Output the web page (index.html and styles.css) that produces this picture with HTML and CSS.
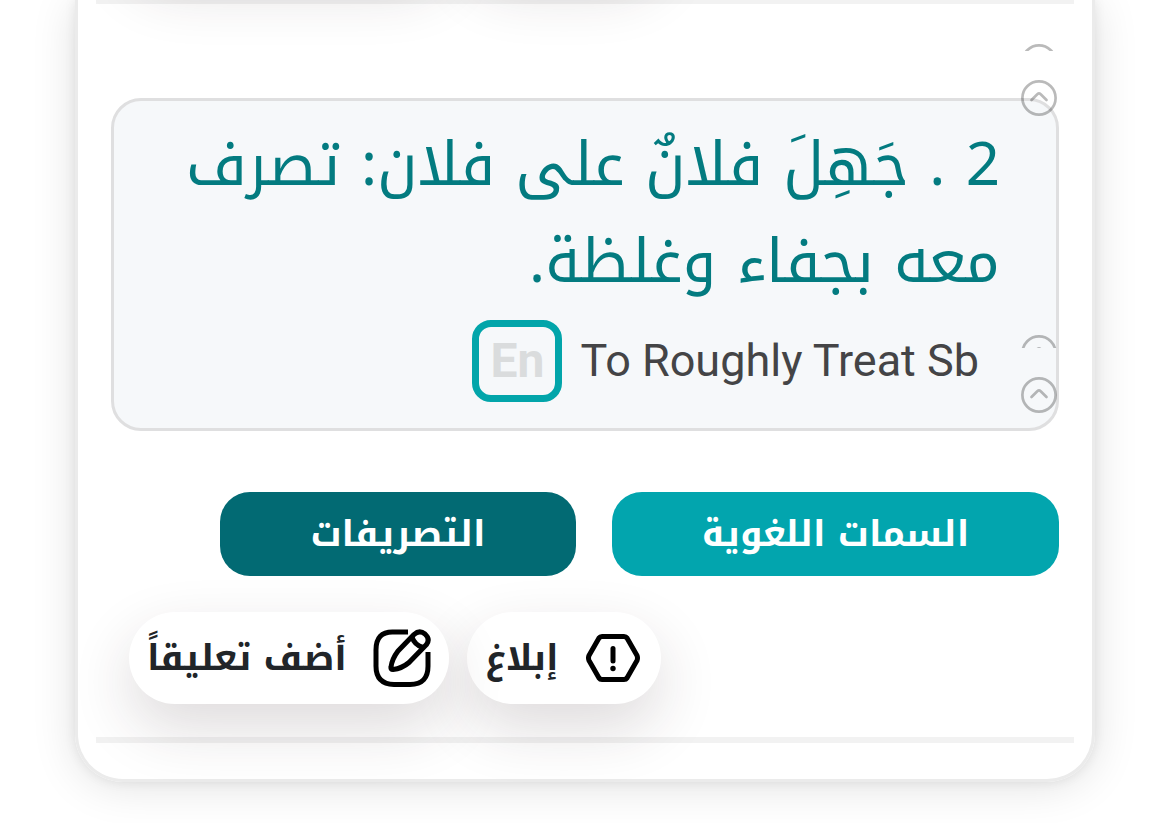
FILE: index.html
```html
<!DOCTYPE html>
<html lang="ar" dir="rtl">
<head>
<meta charset="utf-8">
<meta name="viewport" content="width=device-width, initial-scale=1">
<title>جهل</title>
<link rel="stylesheet" href="styles.css">
</head>
<body>
<main class="card">
  <div class="actions actions-previous" aria-hidden="true">
    <span class="pill pill-short"></span>
    <span class="pill pill-long"></span>
  </div>
  <hr class="divider">

  <section class="entry">
    <div class="definition">
      <p class="meaning">2 . جَهِلَ فلانٌ على فلان: تصرف معه بجفاء وغلظة.</p>
      <div class="translation">
        <span class="english" lang="en" dir="ltr">To Roughly Treat Sb</span>
        <button class="lang" type="button" lang="en">En</button>
      </div>
      <svg class="marks" width="36" height="370" viewBox="0 0 36 370" fill="none" stroke="#000" stroke-opacity=".27" stroke-width="2.7" stroke-linecap="round" stroke-linejoin="round" aria-hidden="true">
        <defs>
          <clipPath id="clip-top"><rect width="36" height="7"/></clipPath>
          <clipPath id="clip-mid"><rect y="291" width="36" height="13"/></clipPath>
        </defs>
        <circle cx="18" cy="18" r="16.6" clip-path="url(#clip-top)"/>
        <circle cx="18" cy="54" r="16.6"/>
        <path d="M10.5 56l5.8-5.8q1.7-1.5 3.4 0l5.8 5.8"/>
        <g clip-path="url(#clip-mid)">
          <circle cx="18" cy="309" r="16.6"/>
          <path d="M10.5 311l5.8-5.8q1.7-1.5 3.4 0l5.8 5.8"/>
        </g>
        <circle cx="18" cy="351" r="16.6"/>
        <path d="M10.5 353l5.8-5.8q1.7-1.5 3.4 0l5.8 5.8"/>
      </svg>
    </div>

    <div class="tabs">
      <button class="tab tab-features" type="button">السمات اللغوية</button>
      <button class="tab tab-forms" type="button">التصريفات</button>
    </div>
  </section>

  <div class="actions">
    <button class="pill pill-short" type="button">
      <svg width="54" height="50" viewBox="0 0 54 50" fill="none" stroke="#000" stroke-width="5" stroke-linecap="round" stroke-linejoin="round" aria-hidden="true">
        <path d="M16 3.5H38Q40 3.5 41 5L51 22.500Q52 25 51 27.500L41 45Q40 46.500 38 46.500H16Q14 46.500 13 45L3 27.500Q2 25 3 22.500L13 5Q14 3.500 16 3.500Z"/>
        <path d="M27 15.500V28"/>
        <circle cx="27" cy="35.500" r="2.700" fill="#000" stroke="none"/>
      </svg>
      <span>إبلاغ</span>
    </button>
    <button class="pill pill-long" type="button">
      <svg width="58" height="58" viewBox="0 0 58 58" fill="none" stroke="#000" stroke-width="5" stroke-linecap="butt" stroke-linejoin="round" aria-hidden="true">
        <path d="M35 3H21Q2.500 2 3 22V36Q2.500 55 21 55.500H37Q55.500 55.500 55 36V23"/>
        <path d="M41 5.500Q46.500 0.500 52 5Q57.500 10 53.500 15.500L36 33.500Q29 39.500 20 40.500Q17.500 40.500 18 38Q19 30 25 22Z"/>
        <path d="M39 8Q41.500 16 50 18.500"/>
      </svg>
      <span>أضف تعليقاً</span>
    </button>
  </div>
  <hr class="divider">
</main>
</body>
</html>
```
FILE: styles.css
```css
* {
  box-sizing: border-box;
}

body {
  margin: 0;
  padding: 0 75px 41px;
  background: #fff;
  overflow: hidden;
  font-family: "Noto Kufi Arabic", "Noto Sans Arabic", "DejaVu Sans", sans-serif;
}

button {
  font: inherit;
  padding: 0;
  border: 0;
  background: none;
  cursor: pointer;
}

.card {
  display: flow-root;
  padding: 0 18px 36px;
  border: 3px solid #ebebeb;
  border-top: 0;
  border-radius: 0 0 48px 48px;
  box-shadow: 0 0 12px rgba(0, 0, 0, 0.08), 0 4px 45px rgba(0, 0, 0, 0.12);
}

.divider {
  height: 6px;
  margin: 33px 0 0;
  border: 0;
  background: rgba(0, 0, 0, 0.05);
}

.entry {
  padding: 94px 15px 0;
}

.definition {
  position: relative;
  min-height: 333px;
  padding: 16px 56px 26px;
  border: 3px solid #dfdfe0;
  border-radius: 30px;
  background: #f6f8fa;
}

.meaning {
  margin: 0;
  color: #037b80;
  font-size: 60px;
  line-height: 97px;
}

.translation {
  display: flex;
  align-items: center;
  gap: 18px;
  margin-top: 9px;
  padding-right: 21px;
}

.english {
  color: #444446;
  font-family: Roboto, sans-serif;
  font-size: 45px;
  line-height: 82px;
}

.lang {
  width: 90px;
  height: 82px;
  border: 7px solid #02a5aa;
  border-radius: 19px;
  color: #dadcdd;
  font-family: Roboto, sans-serif;
  font-size: 48px;
  font-weight: 700;
  line-height: 68px;
}

.marks {
  position: absolute;
  top: -57px;
  right: -1px;
}

.tabs {
  display: flex;
  gap: 36px;
  margin-top: 61px;
}

.tab {
  height: 84px;
  border-radius: 30px;
  color: #fff;
  font-size: 36px;
  font-weight: 700;
}

.tab-features {
  width: 447px;
  background: #02a5ae;
}

.tab-forms {
  width: 356px;
  background: #026a73;
}

.actions {
  display: flex;
  justify-content: flex-end;
  gap: 18px;
  margin-top: 36px;
  padding-left: 33px;
}

.actions-previous {
  margin-top: -127px;
}

.pill {
  display: flex;
  align-items: center;
  justify-content: space-between;
  height: 92px;
  padding: 0 18px;
  border-radius: 46px;
  background: #fff;
  box-shadow: 0 24px 60px rgba(50, 30, 40, 0.16);
  color: #212529;
  font-size: 36px;
  font-weight: 700;
}

.pill-short {
  width: 194px;
  padding-right: 21px;
}

.pill-long {
  width: 320px;
}
```
